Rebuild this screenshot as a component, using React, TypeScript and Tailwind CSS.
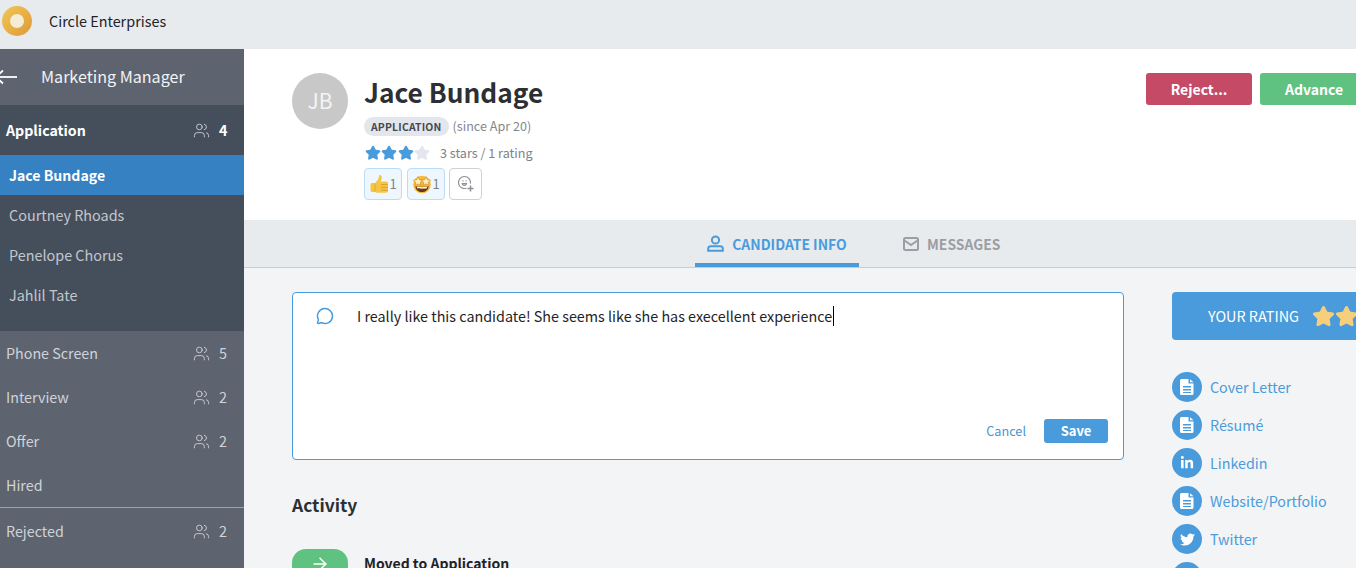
import { ArrowRight, MessageCircle, Star, Users } from 'lucide-react';
import { FaLinkedinIn, FaTwitter } from 'react-icons/fa';

const fontStack = "font-['Noto_Sans_CJK_SC','Noto_Sans',sans-serif]";

const otherStages = [
  { name: 'Phone Screen', count: 5 },
  { name: 'Interview', count: 2 },
  { name: 'Offer', count: 2 },
  { name: 'Hired' },
];

const links = [
  { label: 'Cover Letter', icon: 'doc' },
  { label: 'Résumé', icon: 'doc' },
  { label: 'Linkedin', icon: 'in' },
  { label: 'Website/Portfolio', icon: 'doc' },
  { label: 'Twitter', icon: 'tw' },
];

function DocIcon() {
  return (
    <svg width="14" height="16" viewBox="0 0 14 16" fill="none">
      <path fillRule="evenodd" clipRule="evenodd" d="M1.5 0H8.5V4.5H13.5V14.5A1.5 1.5 0 0 1 12 16H1.5A1.5 1.5 0 0 1 0 14.5V1.5A1.5 1.5 0 0 1 1.5 0ZM3 7V8.4H11V7H3ZM3 10V11.4H11V10H3ZM3 13V14H11V13H3Z" fill="white" />
      <path d="M10 0.2L13.5 3.2H10V0.2Z" fill="white" />
    </svg>
  );
}

function StageCount({ count, bold }: { count: number; bold?: boolean }) {
  return (
    <div className="flex items-center gap-[9px]">
      <Users className="h-[17px] w-[17px] text-[#d5d8dc]" strokeWidth={1.2} />
      <span className={`w-[8px] text-[14.4px] leading-5 ${bold ? 'font-bold text-white' : 'text-[#d0d3d8]'}`}>{count}</span>
    </div>
  );
}

function ThumbEmoji() {
  return (
    <svg width="20" height="20" viewBox="0 0 20 20">
      <path d="M1.5 10.5C1.5 9.5 2.3 9 3.2 9H6.2L9 5.5C9.6 4.6 9.8 3 10 1.7C10.2 0.7 12.6 0.7 12.8 3C12.9 4.5 12.2 6 11.8 7.5H17.2C18.4 7.5 19 8.4 19 9.3V16.6C19 18 18 18.8 16.8 18.8H8.5C7 18.8 6.5 18 5.5 18H3.2C2.2 18 1.5 17.4 1.5 16.5Z" fill="#f7c545" />
      <path d="M12 10.6H19M12 13.4H19M12 16.2H19" stroke="#d99a26" strokeWidth="0.9" />
      <path d="M6 9.5V17.5" stroke="#e0a82e" strokeWidth="0.9" />
    </svg>
  );
}

function StarEmoji() {
  return (
    <svg width="20" height="20" viewBox="0 0 20 20">
      <circle cx="10" cy="10.5" r="8.8" fill="#f7b93e" />
      <path d="M3.4 12.2C5.5 13 14.5 13 16.6 12.2C16.4 16 13.5 18 10 18C6.5 18 3.6 16 3.4 12.2Z" fill="#6b3a12" />
      <path d="M4.8 12.8C7 13.3 13 13.3 15.2 12.8L14.8 14.3C12.5 14.8 7.5 14.8 5.2 14.3Z" fill="white" />
      <path d="M6 2.6L7.4 5.8L10.6 6.2L8.2 8.4L8.8 11.4L6 9.9L3.2 11.4L3.8 8.4L1.4 6.2L4.6 5.8Z" fill="#fff1b8" stroke="#c9801e" strokeWidth="0.6" />
      <path d="M14 2.6L15.4 5.8L18.6 6.2L16.2 8.4L16.8 11.4L14 9.9L11.2 11.4L11.8 8.4L9.4 6.2L12.6 5.8Z" fill="#fff1b8" stroke="#c9801e" strokeWidth="0.6" />
    </svg>
  );
}

function AddReactionIcon() {
  return (
    <svg width="18" height="18" viewBox="0 0 18 18" fill="none" stroke="#8d9196" strokeWidth="1.1">
      <path d="M9.5 13.2A6 6 0 1 1 13.4 8.6" />
      <path d="M5.2 8.6C5.6 11 9 11 9.6 8.6H5.2Z" />
      <path d="M5.6 5.8H6.6M8.6 5.8H9.6" strokeWidth="1.3" />
      <path d="M13.5 10.5V16.5M10.5 13.5H16.5" strokeWidth="1.5" />
    </svg>
  );
}

export default function App() {
  return (
    <div className={`flex h-[568px] w-[1356px] flex-col overflow-hidden bg-[#f3f4f6] ${fontStack}`}>
      {/* Top bar */}
      <div className="flex h-[49px] shrink-0 items-center bg-[#e8ebee] pb-[7px] pl-[2px]">
        <div className="flex h-[30px] w-[30px] items-center justify-center rounded-full bg-gradient-to-br from-[#f2c654] to-[#dd9a38]">
          <div className="h-[14px] w-[14px] rounded-full bg-[#f5ecd6]" />
        </div>
        <span className="ml-[17px] text-[14.4px] leading-5 text-[#1f2328]">Circle Enterprises</span>
      </div>

      <div className="flex min-h-0 flex-1">
        {/* Sidebar */}
        <aside className="flex w-[244px] shrink-0 flex-col bg-[#5d6470]">
          <div className="flex h-[56px] shrink-0 items-center overflow-hidden">
            <svg width="22" height="16" viewBox="0 0 22 16" className="-ml-[5px] shrink-0" fill="none" stroke="white" strokeWidth="1.8">
              <path d="M1 8H22" />
              <path d="M8 1.5L1 8L8 14.5" />
            </svg>
            <span className="ml-[24px] -translate-y-px text-[16.1px] leading-6 text-[#f2f3f5]">Marketing Manager</span>
          </div>

          <div className="h-[226px] shrink-0 bg-[#454f5c]">
            <div className="flex h-[50px] items-center justify-between pl-[6px] pr-[17px]">
              <span className="text-[14.2px] font-bold leading-5 text-white">Application</span>
              <StageCount count={4} bold />
            </div>
            <div className="flex h-[40px] items-center bg-[#3581c1] pl-[9px] text-[14.1px] font-bold leading-5 text-white">Jace Bundage</div>
            {['Courtney Rhoads', 'Penelope Chorus', 'Jahlil Tate'].map((name) => (
              <div key={name} className="flex h-[40px] items-center pl-[9px] text-[14.4px] leading-5 text-[#c3c7cc]">
                {name}
              </div>
            ))}
          </div>

          <div className="flex flex-col">
            {otherStages.map((stage) => (
              <div key={stage.name} className="flex h-[44px] items-center justify-between pl-[6px] pr-[17px]">
                <span className="text-[14.3px] leading-5 text-[#d0d3d8]">{stage.name}</span>
                {stage.count !== undefined && <StageCount count={stage.count} />}
              </div>
            ))}
            <div className="h-px bg-[#9ea3aa]" />
            <div className="flex h-[46px] items-center justify-between pl-[6px] pr-[17px]">
              <span className="text-[14.3px] leading-5 text-[#d0d3d8]">Rejected</span>
              <StageCount count={2} />
            </div>
          </div>
        </aside>

        {/* Main */}
        <main className="flex min-w-0 flex-1 flex-col">
          <header className="flex h-[171px] shrink-0 items-start justify-between bg-white pl-[48px] pt-[24px]">
            <div className="flex">
              <div className="flex h-[56px] w-[56px] items-center justify-center rounded-full bg-[#c8c8c8] text-[21px] text-[#f4f4f4]">JB</div>
              <div className="ml-[16px]">
                <h1 className="-mt-px text-[26.3px] font-semibold leading-[40px] text-[#2c2f33]">Jace Bundage</h1>
                <div className="mt-[4px] flex items-center">
                  <span className="rounded-full bg-[#e3e6ec] px-[7px] text-[10.4px] font-semibold leading-[19px] tracking-[0.2px] text-[#454a50]">APPLICATION</span>
                  <span className="ml-[4px] text-[12.6px] leading-5 text-[#84888e]">(since Apr 20)</span>
                </div>
                <div className="mt-[7px] flex items-center">
                  <div className="flex w-[76px] pl-px">
                    {[0, 1, 2, 3].map((i) => (
                      <Star key={i} className={`mr-[0.3px] h-[16px] w-[16px] ${i < 3 ? 'fill-[#4a9bdb] text-[#4a9bdb]' : 'fill-[#e3e6ec] text-[#e3e6ec]'}`} />
                    ))}
                  </div>
                  <span className="text-[12.6px] leading-5 text-[#7e8288]">3 stars / 1 rating</span>
                </div>
                <div className="mt-[5px] flex gap-[5px]">
                  <div className="flex h-[32px] w-[38px] items-center justify-center rounded-[4px] border border-[#bcdcf5] bg-[#eef7fe] text-[13px] text-[#7e8288]">
                    <ThumbEmoji />1
                  </div>
                  <div className="flex h-[32px] w-[38px] items-center justify-center rounded-[4px] border border-[#bcdcf5] bg-[#eef7fe] text-[13px] text-[#7e8288]">
                    <StarEmoji />1
                  </div>
                  <div className="-ml-[1px] flex h-[32px] w-[33px] items-center justify-center rounded-[4px] border border-[#cfd1d4] bg-white">
                    <AddReactionIcon />
                  </div>
                </div>
              </div>
            </div>
            <div className="flex shrink-0 gap-[8px]">
              <button className="h-[32px] w-[106px] rounded-[3px] bg-[#c44a66] text-[14px] font-semibold text-white">Reject...</button>
              <button className="h-[32px] w-[108px] -mr-[12px] rounded-[3px] bg-[#5fc280] text-[14px] font-semibold text-white">Advance</button>
            </div>
          </header>

          {/* Tabs */}
          <nav className="flex h-[48px] shrink-0 border-b border-[#c9ccd0] bg-[#e8ebee] pl-[451px]">
            <div className="flex h-[47px] w-[164px] items-center justify-center gap-[8px] border-b-4 border-[#4a9bdb] pt-[4px] text-[13.9px] font-semibold leading-5 text-[#4a9bdb]">
              <svg width="17" height="17" viewBox="0 0 17 17" fill="none" stroke="#4a9bdb" strokeWidth="2">
                <circle cx="8.5" cy="5" r="3.6" />
                <path d="M1.2 15.8V13.6C1.2 12.2 2.4 11.2 4 11.2H13C14.6 11.2 15.8 12.2 15.8 13.6V15.8H1.2Z" />
              </svg>
              CANDIDATE INFO
            </div>
            <div className="ml-[44px] flex h-[47px] items-center gap-[8px] text-[13.9px] font-semibold leading-5 text-[#9b9ea3]">
              <svg width="16" height="14" viewBox="0 0 16 14" fill="none" stroke="#9b9ea3" strokeWidth="2">
                <rect x="1" y="1" width="14" height="12" rx="1.5" />
                <path d="M1.5 3.5L8 8L14.5 3.5" />
              </svg>
              MESSAGES
            </div>
          </nav>

          {/* Body */}
          <div className="flex min-h-0 flex-1 pl-[48px] pt-[24px]">
            <div className="w-[832px] shrink-0">
              <div className="flex h-[168px] flex-col rounded-[4px] border border-[#4a9bdb] bg-white">
                <div className="flex flex-1 items-start pl-[23px] pt-[13px]">
                  <MessageCircle className="mt-[1px] h-[18px] w-[18px] text-[#4a9bdb]" strokeWidth={2} />
                  <p className="ml-[23px] flex text-[14.35px] leading-[20px] text-[#1f2328]">
                    I really like this candidate! She seems like she has execellent experience
                    <span className="ml-[1px] h-[20px] w-px bg-black" />
                  </p>
                </div>
                <div className="flex items-center justify-end pb-[16px] pr-[15px]">
                  <span className="text-[12.7px] leading-5 text-[#4a93cf]">Cancel</span>
                  <button className="ml-[18px] h-[24px] w-[64px] rounded-[3px] bg-[#4a9bdb] text-[13px] font-bold leading-5 text-white">Save</button>
                </div>
              </div>

              <h2 className="mt-[31px] text-[17.4px] font-semibold leading-[28px] text-[#2c2f33]">Activity</h2>

              <div className="mt-[30px] flex items-start">
                <div className="flex h-[32px] w-[56px] items-start justify-center rounded-[14px] bg-[#5fc280] pt-[5px]">
                  <ArrowRight className="h-[20px] w-[20px] text-white" strokeWidth={1.8} />
                </div>
                <span className="ml-[16px] mt-[4px] text-[14px] font-semibold leading-5 text-[#1f2328]">Moved to Application</span>
              </div>
            </div>

            <div className="ml-[48px] w-[300px] shrink-0">
              <div className="flex h-[48px] items-center rounded-[4px] bg-[#4a9bdb] pl-[36px]">
                <span className="text-[14.4px] leading-5 text-white">YOUR RATING</span>
                <div className="ml-[13px] flex gap-0">
                  <Star className="h-[23px] w-[23px] fill-[#f7cf7c] text-[#f7cf7c]" />
                  <Star className="h-[23px] w-[23px] fill-[#f7cf7c] text-[#f7cf7c]" />
                  <Star className="h-[23px] w-[23px] fill-[#f7cf7c] text-[#f7cf7c]" />
                </div>
              </div>
              <div className="mt-[32px] flex flex-col gap-[8px]">
                {links.map((link) => (
                  <div key={link.label} className="flex h-[30px] items-center">
                    <div className="flex h-[30px] w-[30px] items-center justify-center rounded-full bg-[#4a9bdb]">
                      {link.icon === 'doc' && <DocIcon />}
                      {link.icon === 'in' && <FaLinkedinIn className="h-[14px] w-[14px] text-white" />}
                      {link.icon === 'tw' && <FaTwitter className="h-[15px] w-[15px] text-white" />}
                    </div>
                    <span className="ml-[8px] text-[14.3px] leading-5 text-[#4a9bdb]">{link.label}</span>
                  </div>
                ))}
                <div className="h-[30px] w-[30px] rounded-full bg-[#4a9bdb]" />
              </div>
            </div>
          </div>
        </main>
      </div>
    </div>
  );
}
